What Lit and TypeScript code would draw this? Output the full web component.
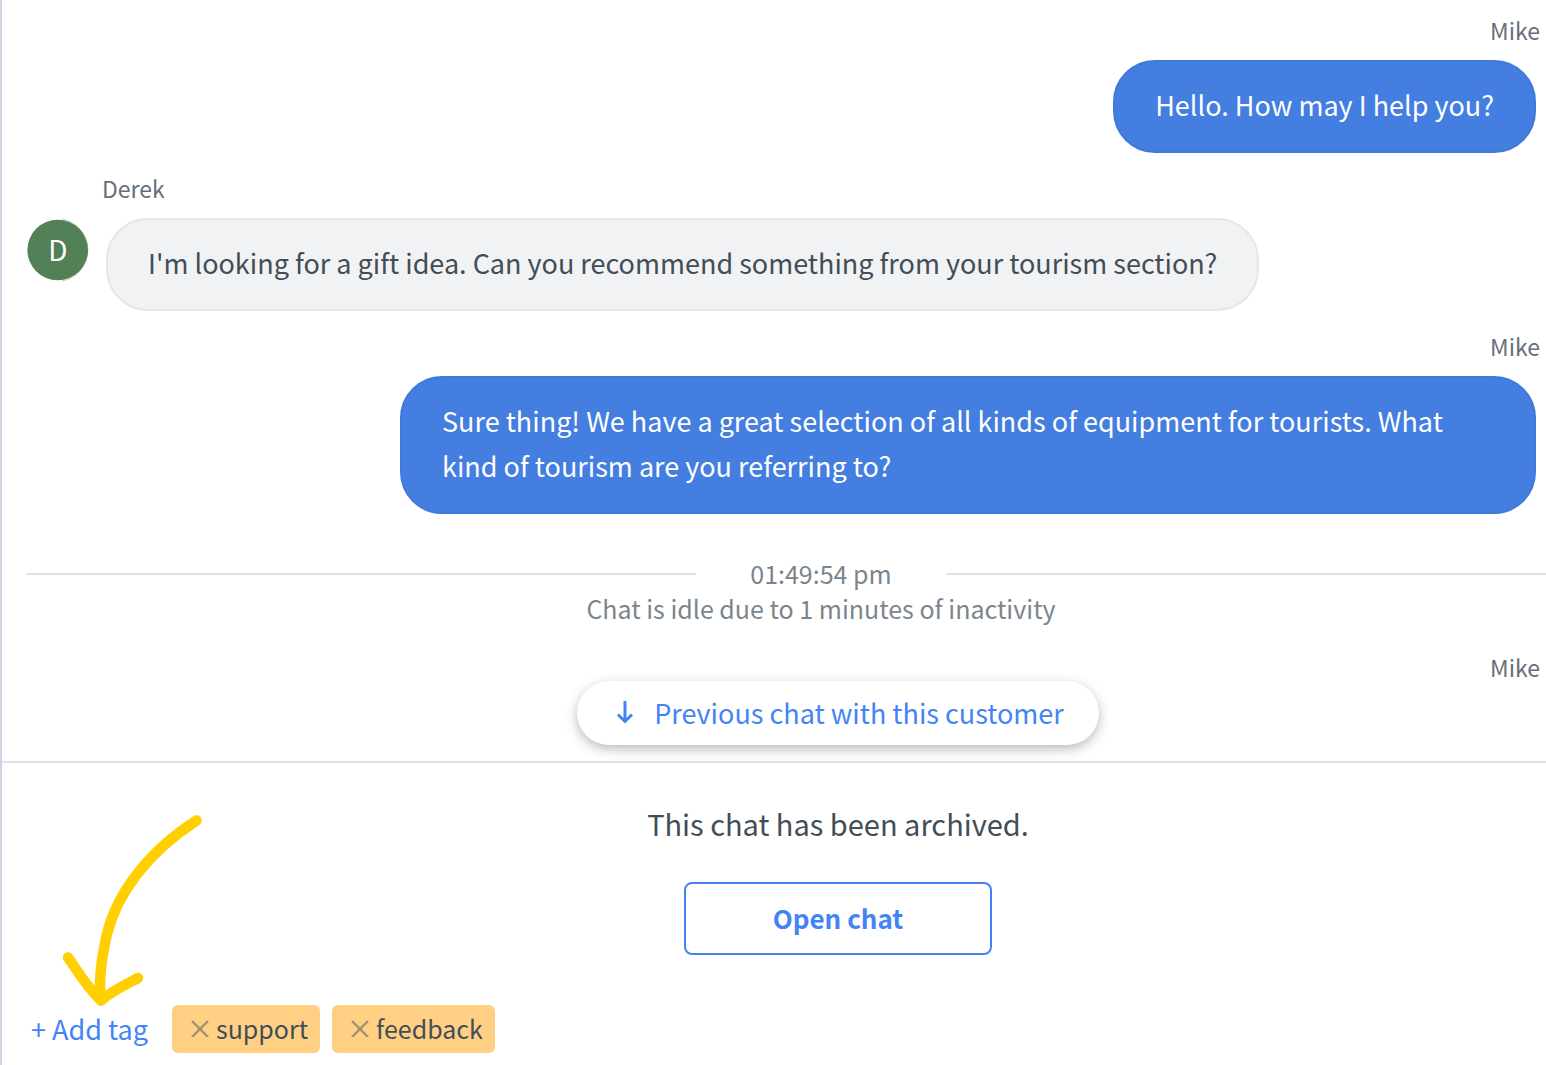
import { LitElement, html, css } from "lit";
import { customElement, property, state } from "lit/decorators.js";

interface Message {
  author: string;
  own: boolean;
  text?: string;
}

const BEFORE_IDLE: Message[] = [
  { author: "Mike", own: true, text: "Hello. How may I help you?" },
  {
    author: "Derek",
    own: false,
    text: "I'm looking for a gift idea. Can you recommend something from your tourism section?",
  },
  {
    author: "Mike",
    own: true,
    text: "Sure thing! We have a great selection of all kinds of equipment for tourists. What kind of tourism are you referring to?",
  },
];

const AFTER_IDLE: Message[] = [{ author: "Mike", own: true }];

@customElement("chat-message")
class ChatMessage extends LitElement {
  @property({ attribute: false }) message!: Message;

  static styles = css`
    :host {
      display: block;
    }
    .name {
      font-size: 23px;
      line-height: 34px;
      color: #66707b;
      margin-bottom: 13px;
      padding-left: 76px;
    }
    .row {
      display: flex;
      align-items: flex-start;
      gap: 16px;
    }
    .own .name {
      text-align: right;
      padding: 0 6px 0 0;
    }
    .own .row {
      justify-content: flex-end;
      padding: 0 10px 0 374px;
    }
    .bubble {
      box-sizing: border-box;
      padding: 20px 40px 24px;
      border: 2px solid #e4e6e8;
      border-radius: 42px;
      background: #f1f2f4;
      color: #424d57;
      font-size: 27px;
      line-height: 45px;
    }
    .own .bubble {
      background: #437ee0;
      border-color: #3f79d9;
      color: #fff;
    }
    .avatar {
      position: relative;
      flex: none;
      width: 64px;
      height: 64px;
      color: #fff;
      font-size: 28px;
      line-height: 62px;
      text-align: center;
    }
    .avatar svg {
      position: absolute;
      inset: 0;
      width: 64px;
      height: 64px;
    }
    .avatar span {
      position: relative;
    }
  `;

  private avatar(author: string) {
    return html`<div class="avatar">
      <svg viewBox="0 0 64 64" aria-hidden="true">
        <path d="M36 1A31.500 31.500 0 0 1 36 63" fill="none" stroke="#528057" stroke-opacity="0.55" stroke-width="0.700" />
        <circle cx="31.700" cy="32" r="30.300" fill="#528057" />
      </svg>
      <span>${author[0]}</span>
    </div>`;
  }

  render() {
    const { author, own, text } = this.message;
    return html`
      <div class=${own ? "own" : "guest"}>
        <div class="name">${author}</div>
        ${text
          ? html`<div class="row">
              ${own ? "" : this.avatar(author)}
              <div class="bubble">${text}</div>
            </div>`
          : ""}
      </div>
    `;
  }
}

@customElement("tag-bar")
class TagBar extends LitElement {
  @state() private tags = ["support", "feedback"];

  static styles = css`
    :host {
      display: flex;
      align-items: center;
      gap: 12px;
    }
    button {
      font: inherit;
      border: 0;
      padding: 0;
      background: none;
      cursor: pointer;
    }
    .add {
      color: #4384f5;
      font-size: 27px;
      line-height: 48px;
      margin-right: 12px;
    }
    .tag {
      display: flex;
      align-items: center;
      gap: 7px;
      padding: 0 12px 2px 19px;
      border-radius: 6px;
      background: #ffd083;
      color: #424d57;
      font-size: 25px;
      line-height: 46px;
    }
    .remove {
      display: flex;
    }
    .remove svg {
      width: 18px;
      height: 18px;
      fill: none;
      stroke: #a18e6c;
      stroke-width: 2.4;
    }
  `;

  private remove(tag: string) {
    this.tags = this.tags.filter((t) => t !== tag);
  }

  render() {
    return html`
      <button class="add" type="button">+ Add tag</button>
      ${this.tags.map(
        (tag) => html`<span class="tag">
          <button class="remove" type="button" aria-label="Remove ${tag}" @click=${() => this.remove(tag)}>
            <svg viewBox="0 0 18 18"><path d="M1 2L17 18M17 2L1 18" /></svg>
          </button>
          <span>${tag}</span>
        </span>`,
      )}
    `;
  }
}

@customElement("app-root")
class AppRoot extends LitElement {
  static styles = css`
    :host {
      box-sizing: border-box;
      display: flex;
      flex-direction: column;
      height: 100vh;
      overflow: hidden;
      border-left: 2px solid #cbd5e2;
      background: #fff;
      font-family: "Noto Sans CJK SC", "Noto Sans", sans-serif;
    }
    button {
      font-family: inherit;
      cursor: pointer;
    }
    .feed {
      position: relative;
      flex: 1;
      min-height: 0;
      overflow: hidden;
      box-sizing: border-box;
      padding: 13px 0 0 24px;
    }
    .group {
      display: flex;
      flex-direction: column;
      gap: 18px;
    }
    .idle {
      margin: 42px -70px 24px 0;
      color: #7b858d;
      font-size: 25px;
      line-height: 35px;
      text-align: center;
    }
    .time {
      display: grid;
      grid-template-columns: 1fr 250px 1fr;
      align-items: center;
    }
    .time::before,
    .time::after {
      content: "";
      height: 2px;
      background: #dde2e6;
    }
    .overlay {
      position: absolute;
      left: 128px;
      right: 0;
      bottom: 16px;
      display: flex;
      justify-content: center;
    }
    .previous {
      display: flex;
      align-items: center;
      gap: 17px;
      height: 64px;
      padding: 0 35px 2px 36px;
      border: 0;
      border-radius: 32px;
      background: #fff;
      box-shadow: 0 4px 12px rgba(66, 77, 87, 0.38);
      color: #4384f5;
      font-size: 27px;
    }
    .previous svg {
      width: 24px;
      height: 24px;
      fill: none;
      stroke: currentColor;
      stroke-width: 3;
    }
    .footer {
      position: relative;
      border-top: 2px solid #dde2e6;
      padding: 40px 0 12px 29px;
    }
    .archived {
      display: flex;
      flex-direction: column;
      align-items: center;
      gap: 39px;
      padding-left: 99px;
      margin-bottom: 50px;
    }
    .archived p {
      margin: 0;
      color: #424d57;
      font-size: 29px;
      line-height: 40px;
    }
    .open {
      width: 308px;
      height: 73px;
      padding: 0 0 2px;
      border: 2px solid #4384f5;
      border-radius: 8px;
      background: #fff;
      color: #4384f5;
      font-size: 26px;
      font-weight: 700;
    }
    .pointer {
      position: absolute;
      left: 58px;
      top: 47px;
      width: 150px;
      height: 200px;
      fill: none;
      stroke: #ffcf00;
      stroke-width: 10.5;
      stroke-linecap: round;
      stroke-linejoin: round;
      pointer-events: none;
    }
  `;

  render() {
    return html`
      <main class="feed">
        <div class="group">${BEFORE_IDLE.map((m) => html`<chat-message .message=${m}></chat-message>`)}</div>
        <div class="idle">
          <div class="time"><time>01:49:54 pm</time></div>
          <div>Chat is idle due to 1 minutes of inactivity</div>
        </div>
        <div class="group">${AFTER_IDLE.map((m) => html`<chat-message .message=${m}></chat-message>`)}</div>
        <div class="overlay">
          <button class="previous" type="button">
            <svg viewBox="0 0 24 24"><path d="M12 1V22M5 14.500L12 21.500L19 14.500" /></svg>
            <span>Previous chat with this customer</span>
          </button>
        </div>
      </main>
      <footer class="footer">
        <div class="archived">
          <p>This chat has been archived.</p>
          <button class="open" type="button">Open chat</button>
        </div>
        <tag-bar></tag-bar>
        <svg class="pointer" viewBox="60 810 150 200" aria-hidden="true">
          <path d="M196.500 820.500C148 852 117 893 107 934C101 960 98.500 983 101 1000" />
          <path d="M68 957.500C79 973 85 985 101 1000.500C112 991 121 987 138 978" />
        </svg>
      </footer>
    `;
  }
}
